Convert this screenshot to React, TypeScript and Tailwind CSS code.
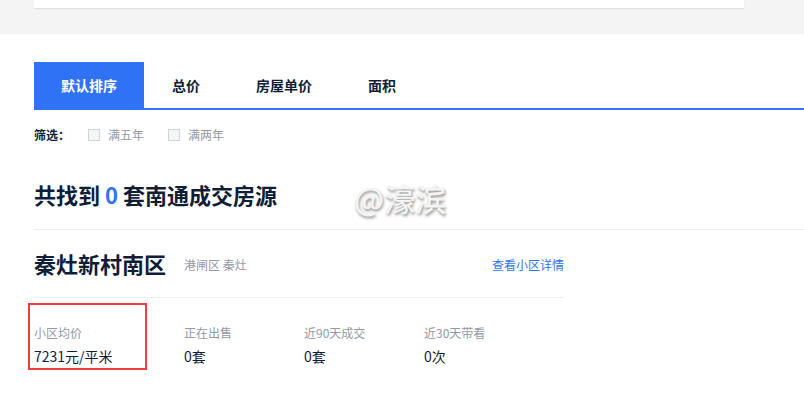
const font = {
  fontFamily: '"Noto Sans CJK SC", "Noto Sans", sans-serif',
};

const tabs = ["默认排序", "总价", "房屋单价", "面积"];

const stats = [
  { label: "小区均价", value: "7231元/平米", width: "w-[150px]", marked: true },
  { label: "正在出售", value: "0套", width: "w-[120px]", marked: false },
  { label: "近90天成交", value: "0套", width: "w-[120px]", marked: false },
  { label: "近30天带看", value: "0次", width: "w-[120px]", marked: false },
];

export default function App() {
  return (
    <div className="min-h-[419px] w-[804px] overflow-hidden bg-white" style={font}>
      {/* top gray band */}
      <div className="h-[34px] bg-[#f4f4f4] pl-[34px]">
        <div className="h-[8px] w-[710px] bg-white shadow-[0_1px_1px_rgba(0,0,0,0.08)]" />
      </div>

      <div className="pl-[34px] pt-[28px]">
        {/* sort tabs */}
        <div className="flex h-[48px] border-b-2 border-[#3072f6]">
          {tabs.map((tab, i) => (
            <div
              key={tab}
              className={
                i === 0
                  ? "flex w-[110px] items-center justify-center bg-[#3072f6] text-[14px] font-bold text-white"
                  : "flex items-center px-[28px] text-[14px] font-bold text-[#101d37]"
              }
            >
              {tab}
            </div>
          ))}
        </div>

        {/* filters */}
        <div className="flex h-[50px] items-center text-[12px]">
          <span className="font-bold text-[#101d37]">筛选：</span>
          <label className="ml-[18px] flex items-center gap-[8px] text-[#9399a5]">
            <span className="h-[12px] w-[12px] border border-[#cfd3d9] bg-[#f4f5f7]" />
            满五年
          </label>
          <label className="ml-[24px] flex items-center gap-[8px] text-[#9399a5]">
            <span className="h-[12px] w-[12px] border border-[#cfd3d9] bg-[#f4f5f7]" />
            满两年
          </label>
        </div>

        {/* result title */}
        <div className="relative flex h-[70px] items-center border-b border-[#eeeeee]">
          <h1 className="text-[22px] font-bold text-[#101d37]">
            共找到 <span className="text-[#3072f6]">0</span> 套南通成交房源
          </h1>
          <span className="absolute left-[320px] top-[15px] text-[31px] font-medium text-[#f4f4f4] [text-shadow:1px_2px_3px_rgba(0,0,0,0.45)]">
            @濠滨
          </span>
        </div>

        {/* community block */}
        <div className="w-[530px]">
          <div className="flex h-[68px] items-center border-b border-[#eeeeee]">
            <h2 className="text-[22px] font-bold text-[#101d37]">秦灶新村南区</h2>
            <span className="ml-[18px] mt-[2px] text-[12px] text-[#9399a5]">港闸区 秦灶</span>
            <a className="ml-auto mt-[2px] text-[12px] text-[#3072f6]">查看小区详情</a>
          </div>

          <div className="flex pt-[26px]">
            {stats.map((s) => (
              <div key={s.label} className={`relative ${s.width}`}>
                {s.marked && (
                  <span className="absolute left-[-6px] top-[-21px] h-[67px] w-[119px] border-2 border-[#f33b3b]" />
                )}
                <div className="text-[12px] leading-[18px] text-[#9399a5]">{s.label}</div>
                <div className="mt-[4px] text-[14px] leading-[20px] text-[#101d37]">{s.value}</div>
              </div>
            ))}
          </div>
        </div>
      </div>
    </div>
  );
}
